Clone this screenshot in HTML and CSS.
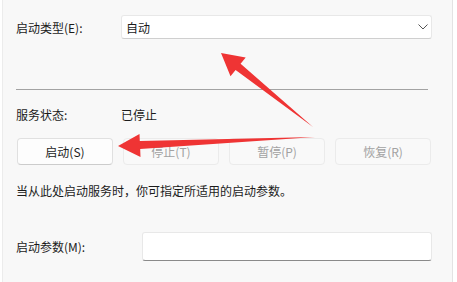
FILE: index.html
```html
<!DOCTYPE html>
<html lang="zh-CN">
<head>
<meta charset="utf-8">
<link rel="stylesheet" href="styles.css">
</head>
<body>
<div class="window">
  <div class="row row-type">
    <span class="label">启动类型(E):</span>
    <div class="combo">
      <span>自动</span>
      <svg class="chev" width="10" height="6" viewBox="0 0 10 6"><path d="M0.5 0.5 L5 5 L9.5 0.5" fill="none" stroke="#555" stroke-width="1"/></svg>
    </div>
  </div>
  <div class="sep"></div>
  <div class="row row-status">
    <span class="label">服务状态:</span>
    <span>已停止</span>
  </div>
  <div class="buttons">
    <button class="btn">启动(S)</button>
    <button class="btn disabled">停止(T)</button>
    <button class="btn disabled">暂停(P)</button>
    <button class="btn disabled">恢复(R)</button>
  </div>
  <p class="desc">当从此处启动服务时，你可指定所适用的启动参数。</p>
  <div class="row row-param">
    <span class="label label-wide">启动参数(M):</span>
    <div class="input"></div>
  </div>
</div>
<svg class="arrows" width="457" height="282" viewBox="0 0 457 282">
  <polygon fill="#ef3434" points="221,53 245.7,57.6 240.6,63.8 313,127 235.6,70 230.5,76.2"/>
  <polygon fill="#ef3434" points="118,146 139.5,134 139.8,141 315,137 140.2,149 140.5,157"/>
</svg>
</body>
</html>
```
FILE: styles.css
```css
html, body {
  margin: 0;
  padding: 0;
  background: #ffffff;
}
body {
  width: 457px;
  height: 282px;
  overflow: hidden;
  position: relative;
  font-family: "Noto Sans CJK SC", "Microsoft YaHei", sans-serif;
  font-size: 12px;
  color: #1b1b1b;
}
.window {
  margin-left: 2px;
  width: 451px;
  height: 282px;
  box-sizing: border-box;
  background: #f8f8f8;
  border-left: 1px solid #ececec;
  border-right: 1px solid #e3e3e3;
  padding: 15px 0 0 13px;
}
.row {
  display: flex;
  align-items: center;
}
.label {
  width: 105px;
  flex: none;
}
.label-wide {
  width: 126px;
}
.combo {
  width: 311px;
  height: 24px;
  box-sizing: border-box;
  background: #ffffff;
  border: 1px solid #e8e8e8;
  border-bottom-color: #cfcfcf;
  border-radius: 3px;
  display: flex;
  align-items: center;
  justify-content: space-between;
  padding: 0 3px 0 4px;
}
.chev {
  display: block;
}
.sep {
  margin-top: 50px;
  width: 412px;
  height: 1px;
  background: #a3a3a3;
}
.row-status {
  margin-top: 16px;
  height: 17px;
}
.buttons {
  margin-top: 15px;
  display: flex;
  gap: 10px;
  padding-left: 1px;
}
.btn {
  width: 96px;
  height: 27px;
  box-sizing: border-box;
  background: #fdfdfd;
  border: 1px solid #e0e0e0;
  border-bottom-color: #cccccc;
  border-radius: 4px;
  font: inherit;
  color: #1b1b1b;
  padding: 0;
}
.btn.disabled {
  background: #f9f9f9;
  border-color: #ebebeb;
  color: #a2a2a2;
}
.desc {
  margin: 17px 0 0 0;
  line-height: 17px;
}
.row-param {
  margin-top: 33px;
}
.input {
  width: 290px;
  height: 29px;
  box-sizing: border-box;
  background: #ffffff;
  border: 1px solid #e8e8e8;
  border-bottom: 1px solid #8a8a8a;
  border-radius: 3px;
}
.arrows {
  position: absolute;
  left: 0;
  top: 0;
}
```
